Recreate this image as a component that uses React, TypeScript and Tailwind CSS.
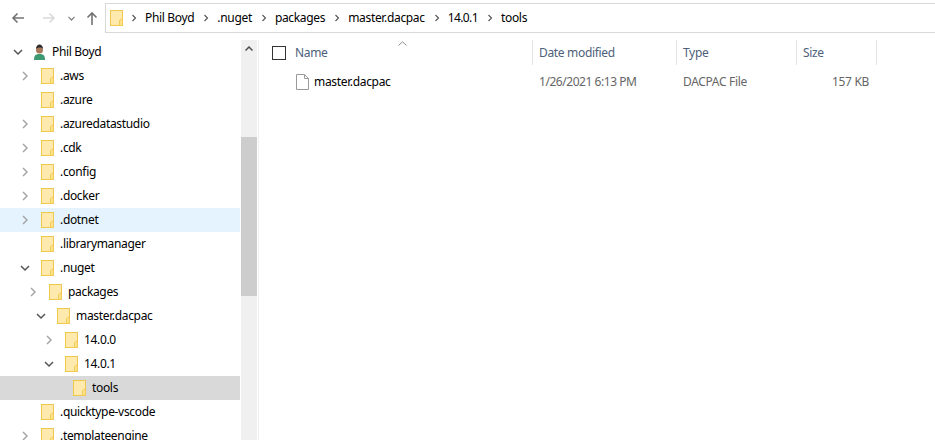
import React from "react";

const font = "font-['Noto_Sans',sans-serif]";

const Folder = ({ className = "" }: { className?: string }) => (
  <svg className={className} width="14" height="17" viewBox="0 0 14 17">
    <rect x="0.5" y="0.5" width="12" height="15" fill="#ffe9ad" stroke="#efc94f" />
    <path d="M9.5 15.5v-5l3-2v7z" fill="#ffe08c" stroke="#efc94f" strokeWidth="0.9" />
  </svg>
);

const Chevron = ({ open, dark }: { open?: boolean; dark?: boolean }) => (
  <svg width="10" height="10" viewBox="0 0 10 10" fill="none" stroke={open || dark ? "#555" : "#a6a6a6"} strokeWidth="1.5">
    {open ? <path d="M1 3l4 4 4-4" /> : <path d="M3 1l4 4-4 4" />}
  </svg>
);

type Row = {
  name: string;
  pad: string;
  arrow?: "open" | "closed";
  bg?: string;
};

const rows: Row[] = [
  { name: ".aws", pad: "pl-[20px]", arrow: "closed" },
  { name: ".azure", pad: "pl-[20px]" },
  { name: ".azuredatastudio", pad: "pl-[20px]", arrow: "closed" },
  { name: ".cdk", pad: "pl-[20px]", arrow: "closed" },
  { name: ".config", pad: "pl-[20px]", arrow: "closed" },
  { name: ".docker", pad: "pl-[20px]", arrow: "closed" },
  { name: ".dotnet", pad: "pl-[20px]", arrow: "closed", bg: "bg-[#e5f3ff]" },
  { name: ".librarymanager", pad: "pl-[20px]" },
  { name: ".nuget", pad: "pl-[20px]", arrow: "open" },
  { name: "packages", pad: "pl-[28px]", arrow: "closed" },
  { name: "master.dacpac", pad: "pl-[36px]", arrow: "open" },
  { name: "14.0.0", pad: "pl-[44px]", arrow: "closed" },
  { name: "14.0.1", pad: "pl-[44px]", arrow: "open" },
  { name: "tools", pad: "pl-[52px]", bg: "bg-[#d9d9d9]" },
  { name: ".quicktype-vscode", pad: "pl-[20px]" },
  { name: ".templateengine", pad: "pl-[20px]", arrow: "closed" },
];

const crumbs = [
  { label: "Phil Boyd", cls: "" },
  { label: ".nuget", cls: "" },
  { label: "packages", cls: "" },
  { label: "master.dacpac", cls: "" },
  { label: "14.0.1", cls: "tracking-[-0.6px]" },
  { label: "tools", cls: "" },
];

const columns = [
  { label: "Date modified", cls: "w-[144px]" },
  { label: "Type", cls: "w-[120px]" },
  { label: "Size", cls: "w-[80px]" },
];

export default function App() {
  return (
    <div className={`h-[440px] w-[935px] overflow-hidden bg-white text-[12px] leading-[16px] tracking-[-0.33px] text-black ${font}`}>
      {/* nav + address */}
      <div className="flex h-[40px] items-start pt-[3px]">
        <div className="flex h-[30px] w-[105px] items-center pl-[11px] text-[#7a7a7a]">
          <svg width="14" height="12" viewBox="0 0 14 12" fill="none" stroke="#737373" strokeWidth="1.6">
            <path d="M13 6H2M6.5 1.5L2 6l4.5 4.5" />
          </svg>
          <svg className="ml-[17px]" width="14" height="12" viewBox="0 0 14 12" fill="none" stroke="#d9d9d9" strokeWidth="1.6">
            <path d="M1 6h11M7.5 1.5L12 6l-4.500 4.500" />
          </svg>
          <svg className="ml-[12px]" width="7" height="5" viewBox="0 0 7 5" fill="none" stroke="#808080" strokeWidth="1.2">
            <path d="M.5 .8L3.500 4l3-3.200" />
          </svg>
          <svg className="ml-[11px]" width="12" height="14" viewBox="0 0 12 14" fill="none" stroke="#737373" strokeWidth="1.6">
            <path d="M6 14V2M1.500 6.500L6 2l4.500 4.500" />
          </svg>
        </div>
        <div className="flex h-[30px] flex-1 items-center border-y border-l border-[#d9d9d9] pl-[4px]">
          <Folder className="mr-[-2px]" />
          {crumbs.map((c) => (
            <div key={c.label} className="flex items-center">
              <span className="ml-[7px] mr-[6px] scale-75">
                <Chevron dark />
              </span>
              <span className={c.cls}>{c.label}</span>
            </div>
          ))}
        </div>
      </div>

      <div className="flex h-[400px]">
        {/* tree */}
        <div className="mr-px w-[240px] shrink-0 overflow-hidden">
          <div className="flex h-[24px] items-center pl-[13px]">
            <Chevron open />
            <svg className="ml-[10px]" width="13" height="16" viewBox="0 0 13 16">
              <path d="M1 16c0-4 1-6 5.500-6S12 12 12 16z" fill="#3f9a74" />
              <circle cx="6.500" cy="6" r="3.500" fill="#a9785a" />
              <path d="M3 5c0-6 7-6 7 0-1-2-5-2-7 0z" fill="#2c2c2c" />
            </svg>
            <span className="ml-[6px]">Phil Boyd</span>
          </div>
          {rows.map((r) => (
            <div key={r.name} className={`flex h-[24px] items-center ${r.pad} ${r.bg ?? ""}`}>
              <span className="flex w-[21px] shrink-0 items-center">
                {r.arrow && <Chevron open={r.arrow === "open"} />}
              </span>
              <Folder />
              <span className="ml-[5px]">{r.name}</span>
            </div>
          ))}
        </div>

        {/* scrollbar */}
        <div className="flex w-[16px] shrink-0 flex-col bg-[#f0f0f0]">
          <div className="flex h-[17px] items-center justify-center">
            <svg width="8" height="5" viewBox="0 0 8 5" fill="none" stroke="#505050" strokeWidth="1.5">
              <path d="M.5 4.500L4 1l3.500 3.500" />
            </svg>
          </div>
          <div className="mt-[80px] h-[159px] bg-[#cdcdcd]" />
        </div>
        <div className="w-px shrink-0" />
        <div className="w-px shrink-0 bg-[#f0f0f0]" />

        {/* file list */}
        <div className="min-w-0 flex-1 text-[#666]">
          <div className="flex h-[25px] items-center">
            <div className="ml-[13px] h-[14px] w-[14px] border border-[#333]" />
            <div className="relative flex h-[25px] w-[246px] items-center pl-[9px] text-[#4c607a]">
              Name
              <svg className="absolute left-[112px] top-[1px]" width="9" height="5" viewBox="0 0 9 5" fill="none" stroke="#8c8c8c">
                <path d="M.5 4.500L4.500 .8l4 3.700" />
              </svg>
            </div>
            {columns.map((c) => (
              <div key={c.label} className={`flex h-[25px] items-center border-l border-[#e5e5e5] pl-[6px] text-[#4c607a] ${c.cls}`}>
                {c.label}
              </div>
            ))}
            <div className="h-[25px] border-l border-[#e5e5e5]" />
          </div>
          <div className="mt-[6px] flex h-[22px] items-center">
            <svg className="ml-[37px]" width="13" height="16" viewBox="0 0 13 16" fill="none">
              <path d="M.5.500h8l4 4v11H.5z" fill="#fff" stroke="#9a9a9a" />
              <path d="M8.500.500v4h4" stroke="#9a9a9a" />
            </svg>
            <span className="ml-[5px] w-[225px] text-black">master.dacpac</span>
            <span className="w-[144px] tracking-[-0.45px]">1/26/2021 6:13 PM</span>
            <span className="w-[120px]">DACPAC File</span>
            <span className="w-[66px] text-right">157 KB</span>
          </div>
        </div>
      </div>
    </div>
  );
}
